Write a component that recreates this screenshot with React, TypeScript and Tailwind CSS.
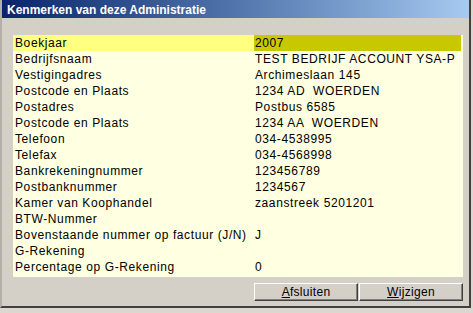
const rows: [string, string][] = [
  ["Boekjaar", "2007"],
  ["Bedrijfsnaam", "TEST BEDRIJF ACCOUNT YSA-P"],
  ["Vestigingadres", "Archimeslaan 145"],
  ["Postcode en Plaats", "1234 AD  WOERDEN"],
  ["Postadres", "Postbus 6585"],
  ["Postcode en Plaats", "1234 AA  WOERDEN"],
  ["Telefoon", "034-4538995"],
  ["Telefax", "034-4568998"],
  ["Bankrekeningnummer", "123456789"],
  ["Postbanknummer", "1234567"],
  ["Kamer van Koophandel", "zaanstreek 5201201"],
  ["BTW-Nummer", ""],
  ["Bovenstaande nummer op factuur (J/N)", "J"],
  ["G-Rekening", ""],
  ["Percentage op G-Rekening", "0"],
];

function Row({ label, value, active }: { label: string; value: string; active: boolean }) {
  return (
    <div className="flex h-[16px]">
      <div className={`w-[241px] pl-[2px] pt-px leading-[15px] whitespace-nowrap overflow-hidden ${active ? "bg-[#ffff80]" : ""}`}>
        {label}
      </div>
      <div className={`w-[207px] pl-[1px] pt-px leading-[15px] whitespace-pre overflow-hidden ${active ? "bg-[#c8c800]" : ""}`}>
        {value}
      </div>
    </div>
  );
}

function WinButton({ first, rest }: { first: string; rest: string }) {
  return (
    <button className="w-[104px] h-[18px] bg-[#d4d0c8] border border-t-white border-l-white border-r-[#404040] border-b-[#404040] shadow-[inset_-1px_-1px_0_#808080] text-[12px] leading-[14px] tracking-[0.3px] text-black">
      <span className="underline">{first}</span>
      {rest}
    </button>
  );
}

export default function App() {
  return (
    <div className="w-[473px] h-[313px] overflow-hidden bg-[#dcd8d0] font-['Liberation_Sans',Arial,sans-serif] text-black">
      <div className="w-[471px] h-[308px] bg-[#d4d0c8] border-l-2 border-l-[#b4b0a8] border-r-2 border-r-[#404040] border-b-2 border-b-[#404040] flex flex-col">
        {/* title bar */}
        <div className="h-[18px] bg-gradient-to-r from-[#0a246a] to-[#a6caf0] text-white font-bold text-[12px] leading-[18px] pl-[5px] pt-px">
          Kenmerken van deze Administratie
        </div>

        <div className="pt-[17px] pl-[11px]">
          <div className="w-[450px] bg-[#ffffe1] pb-[2px] text-[12px] tracking-[0.6px]">
            {rows.map((r, i) => (
              <Row key={i} label={r[0]} value={r[1]} active={i === 0} />
            ))}
          </div>
        </div>

        <div className="flex gap-[1px] mt-[6px] pl-[252px]">
          <WinButton first="A" rest="fsluiten" />
          <WinButton first="W" rest="ijzigen" />
        </div>
      </div>
    </div>
  );
}
